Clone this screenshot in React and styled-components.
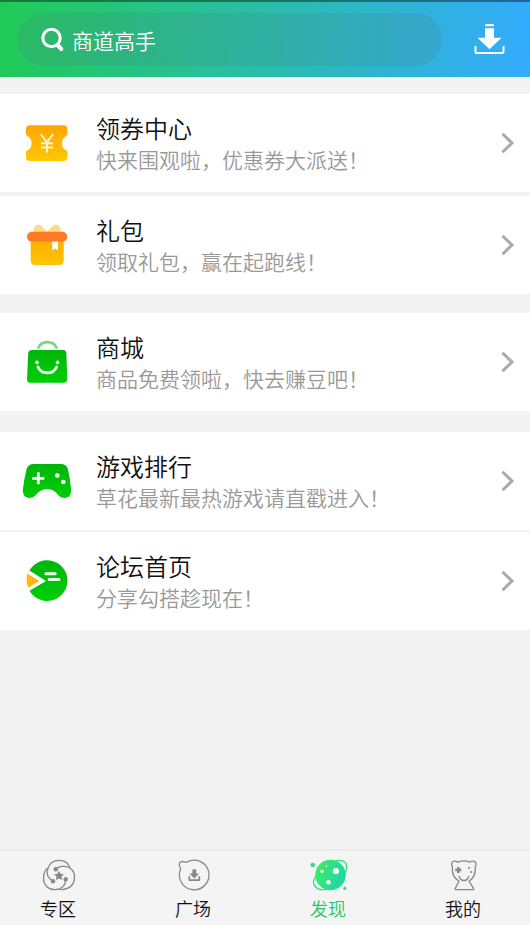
import React from 'react';
import styled, { createGlobalStyle } from 'styled-components';

const Global = createGlobalStyle`
  * { box-sizing: border-box; }
  body { margin: 0; background: #f3f3f3; }
`;

const Screen = styled.div`
  width: 530px;
  height: 925px;
  display: flex;
  flex-direction: column;
  background: #f3f3f3;
  overflow: hidden;
  font-family: 'Noto Sans CJK SC DemiLight', 'Noto Sans CJK SC', sans-serif;
  font-weight: 350;
`;

const Header = styled.header`
  height: 77px;
  flex: none;
  display: flex;
  align-items: center;
  justify-content: space-between;
  padding: 0 24px 0 18px;
  border-style: solid;
  border-image: linear-gradient(90deg, #147b39, #1a7759 50%, #1f6798) 1;
  border-width: 2px 0 0;
  background: linear-gradient(96deg, #21ca56, #2abcae 52%, #34abff);
`;

const SearchBox = styled.div`
  width: 424px;
  height: 53px;
  border-radius: 27px;
  display: flex;
  align-items: center;
  padding-left: 22px;
  gap: 6px;
  background: rgba(75, 125, 130, 0.2);
  color: #fff;
  font-size: 21px;
  line-height: 30px;
`;

const SearchText = styled.span`
  padding-top: 1px;
`;

const Icon = styled.svg`
  display: block;
  flex: none;
  overflow: visible;
`;

const List = styled.main`
  flex: 1;
  padding-top: 17px;
`;

const Group = styled.section`
  display: grid;
  gap: ${(p) => p.$gap}px;
  margin-bottom: ${(p) => p.$after}px;
`;

const Row = styled.div`
  height: 98px;
  display: flex;
  align-items: center;
  padding: 0 15px 0 20px;
  background: #fff;
`;

const RowText = styled.div`
  flex: 1;
  padding-left: 22px;
`;

const Title = styled.div`
  height: 33px;
  font-size: 24px;
  line-height: 31px;
  color: #111;
`;

const Subtitle = styled.div`
  height: 30px;
  font-size: 21px;
  line-height: 29px;
  color: #999;
  white-space: nowrap;
`;

const TabBar = styled.nav`
  height: 76px;
  flex: none;
  display: grid;
  grid-template-columns: repeat(4, 135px);
  margin-left: -9.5px;
  width: 540px;
  border-top: 2px solid #ebebeb;
  background: #f4f4f4;
`;

const Tab = styled.div`
  display: flex;
  flex-direction: column;
  align-items: center;
  padding-top: 5px;
  font-size: 18px;
  line-height: 26px;
  color: ${(p) => (p.$active ? '#28c75a' : '#111')};
`;

const TabLabel = styled.span`
  margin-top: 1px;
`;

const SearchIcon = () => (
  <Icon width="26" height="27" viewBox="0 0 26 27" fill="none" stroke="#fff">
    <circle cx="11.500" cy="12" r="8.700" strokeWidth="3" />
    <path d="M17.500 19 21.300 23" strokeWidth="4" strokeLinecap="round" />
  </Icon>
);

const DownloadIcon = () => (
  <Icon width="32" height="35" viewBox="0.5 0.5 32 35">
    <path d="M11.500 4a1.500 1.500 0 0 1 1.500-1.500h6A1.500 1.500 0 0 1 20.500 4v.7h-9zM11.500 6.800h9v9.400H28L16 27.700 4 16.200h7.500z" fill="#fff" />
    <path d="M2 24.500v5.700q0 1.300 1.300 1.300h25.400q1.300 0 1.300-1.300v-5.700" fill="none" stroke="#fff" strokeWidth="2" />
  </Icon>
);

const Chevron = () => (
  <Icon width="15" height="24" viewBox="0 0 15 24">
    <path d="M2.500 2.700 12 12l-9.500 9.300" fill="none" stroke="#aaa" strokeWidth="3" />
  </Icon>
);

const RowIcon = ({ id, from, to, children }) => (
  <Icon width="54" height="50" viewBox="0 0 54 50">
    <defs>
      <linearGradient id={id} x1="0" y1="0" x2="0" y2="1">
        <stop offset="0" stopColor={from} />
        <stop offset="1" stopColor={to} />
      </linearGradient>
    </defs>
    {children}
  </Icon>
);

const CouponIcon = () => (
  <RowIcon id="coupon" from="#ffa602" to="#ffc800">
    <path d="M10 7.300h33.500q4 0 4 4v4.500q0 1.300-1.200 2a8.500 8.500 0 0 0 0 14.800q1.200.7 1.200 2V39q0 4-4 4H10q-4 0-4-4v-4.400q0-1.300 1.200-2a8.500 8.500 0 0 0 0-14.800Q6 17.100 6 15.800v-4.500q0-4 4-4z" fill="url(#coupon)" />
    <path d="m20.700 16 6.200 8.300L33.200 16M27 24.300v10.200M21 25.300h12M21 29.500h12" fill="none" stroke="#fff5cf" strokeWidth="2" />
  </RowIcon>
);

const GiftIcon = () => (
  <RowIcon id="gift" from="#ffac05" to="#ffc400">
    <path d="M13.700 13V9.500C14.500 4 19 3.500 22 6.500l5 5 5-5c3-3 7.800-2.300 8.600 2.500V13z" fill="#ffda80" />
    <path d="M10.700 17h33v23.500q0 4.500-4.500 4.500h-24q-4.500 0-4.500-4.500z" fill="url(#gift)" />
    <rect x="7" y="11.800" width="40.200" height="9.800" rx="4.900" fill="#ff7a23" />
    <path d="M32.200 21.600h5.800v9l-2.900-2-2.900 2z" fill="#fff" />
  </RowIcon>
);

const BagIcon = () => (
  <RowIcon id="bag" from="#00b60a" to="#00ce06">
    <path d="M18.500 10.500q2.500-5.400 9-5.400t9 5.400" fill="none" stroke="#78d77c" strokeWidth="2.800" strokeLinecap="round" />
    <path d="M12 13h31q3.200 0 3.400 3.200l.8 26q0 3.500-3.600 3.500H10.500q-3.600 0-3.500-3.500l1.200-26Q8.500 13 12 13z" fill="url(#bag)" />
    <g fill="none" stroke="#e5ffe2" strokeLinecap="round">
      <path d="M18 30c3.200 7.800 15.500 7.800 18.500 0" strokeWidth="3" />
      <path d="M17 25.400h.01M37.500 25.400h.01" strokeWidth="3.700" />
    </g>
  </RowIcon>
);

const GamepadIcon = () => (
  <RowIcon id="gamepad" from="#00b50b" to="#00cf06">
    <path d="M13.500 8h27.500q5 0 6.700 4.500 2.500 10 3.300 20C51.500 38 49.500 42 44.500 42c-7.500 0-6.500-8.700-17.300-8.700S17.300 42 9.500 42C4.500 42 2.300 38 3 32.500q1.200-10 3.700-20Q8.500 8 13.500 8z" fill="url(#gamepad)" />
    <path d="M18.300 16.300v12M12.300 22.300h12" fill="none" stroke="#fff" strokeWidth="2.800" />
    <circle cx="37.300" cy="19.500" r="2.300" fill="#fff" />
    <circle cx="43.300" cy="26" r="2.300" fill="#fff" />
  </RowIcon>
);

const ForumIcon = () => (
  <RowIcon id="forum" from="#00b50d" to="#00cf07">
    <path d="M9.400 14.500A20.400 20.400 0 1 1 9.400 34.800L26 24.900z" fill="url(#forum)" />
    <path d="M7.300 17.500 19.300 25 8.300 31.500Q5.500 25 7.300 17.500z" fill="#ffb610" />
    <path d="M25.800 17.800h9.400M29.200 23.500h9.800" stroke="#ecffe9" strokeWidth="3" strokeLinecap="round" />
  </RowIcon>
);

const TabIcon = ({ children }) => (
  <Icon width="38" height="38" viewBox="0.5 0 38 38" fill="none" stroke="#888" strokeWidth="1.300" strokeLinejoin="round">
    {children}
  </Icon>
);

const ZoneIcon = () => (
  <TabIcon>
    <path d="M17.200 13.300C20 10 26 9.500 30.800 11.500 39 17 38 32 24.500 33.500q-2 .3-4-.5" />
    <path d="M14.500 25.300C9 22 8 17 9.300 13 11 7.500 15 4.400 20.500 4.400c5 0 9.500 2.800 11 7.600" />
    <path d="M27.200 23.300c0 6-4 10-10.500 10.300C9.500 34 5 28.500 5 22.500c0-5 1.500-8.500 4.200-10.500" />
    <g fill="#888" stroke="none">
      <circle cx="17.200" cy="13.300" r="2.200" />
      <circle cx="14.500" cy="25.200" r="2.200" />
      <circle cx="27.200" cy="23.300" r="2.200" />
      <path d="m20.500 14.800 1.500 3 3.400.4-2.400 2.400.6 3.400-3.100-1.600-3.100 1.600.6-3.400-2.400-2.400 3.400-.4z" />
    </g>
  </TabIcon>
);

const SquareIcon = () => (
  <TabIcon>
    <path d="M7.200 13C5 9 5.300 6.300 8 5.600c2-.5 3.200.6 5 .8A14.800 14.800 0 1 1 7.200 13z" />
    <path d="M18.900 14.200q0-1 1-1h1.800q1 0 1 1v3.300h3l-4.900 5-4.900-5h3z" fill="#888" stroke="none" />
    <path d="M15.800 20.200v3.900h10v-3.900" strokeWidth="1.700" />
  </TabIcon>
);

const DiscoverIcon = () => (
  <TabIcon>
    <defs>
      <linearGradient id="planet" x1="0" y1="0" x2="1" y2=".35">
        <stop offset="0" stopColor="#43ec60" />
        <stop offset="1" stopColor="#1dd9a2" />
      </linearGradient>
    </defs>
    <circle cx="22" cy="19" r="15.200" fill="url(#planet)" stroke="none" />
    <path d="M27 4.800C32 3.500 37 5 38 9.500c.8 4-1 8-4.700 12" stroke="#39e07c" />
    <path d="M7.500 19.500c-3 4.500-3.200 9-.5 11.500 3 3 7 3.300 12 2" stroke="#2bddb0" />
    <path d="M19 32.800c8-2.500 14.500-8 17-15" stroke="#2cce99" strokeWidth=".7" />
    <circle cx="4.300" cy="9" r="2.300" fill="#32d780" stroke="none" />
    <circle cx="36.300" cy="32.300" r="1.600" fill="#2ed994" stroke="none" />
    <g fill="#fff" stroke="none">
      <circle cx="27.400" cy="15" r="3.100" />
      <circle cx="13.500" cy="15.300" r="1.600" />
      <circle cx="20" cy="26.300" r="2.200" />
      <circle cx="18" cy="10.300" r=".8" />
    </g>
  </TabIcon>
);

const MineIcon = () => (
  <TabIcon>
    <path d="M15.500 25.200C9.500 21.500 8.300 16 9 11 7.200 8.500 8 5.300 10.800 5.100c1.400-.1 2.700.3 3.700 1 3.700-1.500 8.300-1.500 12 0 1-.8 2.800-1.200 4.200-.8 2.200.8 2.600 3.700 1 5.700.7 6-1.200 11-6.200 14.200l4.500 7.200c.5.900.1 1.300-.8 1.300H12.400c-.9 0-1.200-.6-.7-1.300z" />
    <path d="M15.600 20c1.500 6 8.300 6 9.700 0" />
    <path d="M14.800 11v6M11.800 14h6" strokeWidth="2.500" />
    <circle cx="25.500" cy="12" r="1.100" fill="#888" stroke="none" />
    <circle cx="27.800" cy="16" r="1.100" fill="#888" stroke="none" />
  </TabIcon>
);

const groups = [
  {
    gap: 4,
    after: 19,
    rows: [
      { title: '领券中心', text: '快来围观啦，优惠券大派送！', Glyph: CouponIcon },
      { title: '礼包', text: '领取礼包，赢在起跑线！', Glyph: GiftIcon },
    ],
  },
  {
    gap: 0,
    after: 21,
    rows: [{ title: '商城', text: '商品免费领啦，快去赚豆吧！', Glyph: BagIcon }],
  },
  {
    gap: 2,
    after: 0,
    rows: [
      { title: '游戏排行', text: '草花最新最热游戏请直戳进入！', Glyph: GamepadIcon },
      { title: '论坛首页', text: '分享勾搭趁现在！', Glyph: ForumIcon },
    ],
  },
];

const tabs = [
  { label: '专区', Glyph: ZoneIcon },
  { label: '广场', Glyph: SquareIcon },
  { label: '发现', Glyph: DiscoverIcon, active: true },
  { label: '我的', Glyph: MineIcon },
];

export default function App() {
  return (
    <Screen lang="zh-CN">
      <Global />
      <Header>
        <SearchBox>
          <SearchIcon />
          <SearchText>商道高手</SearchText>
        </SearchBox>
        <DownloadIcon />
      </Header>
      <List>
        {groups.map((group, i) => (
          <Group key={i} $gap={group.gap} $after={group.after}>
            {group.rows.map(({ title, text, Glyph }) => (
              <Row key={title}>
                <Glyph />
                <RowText>
                  <Title>{title}</Title>
                  <Subtitle>{text}</Subtitle>
                </RowText>
                <Chevron />
              </Row>
            ))}
          </Group>
        ))}
      </List>
      <TabBar>
        {tabs.map(({ label, Glyph, active }) => (
          <Tab key={label} $active={active}>
            <Glyph />
            <TabLabel>{label}</TabLabel>
          </Tab>
        ))}
      </TabBar>
    </Screen>
  );
}
